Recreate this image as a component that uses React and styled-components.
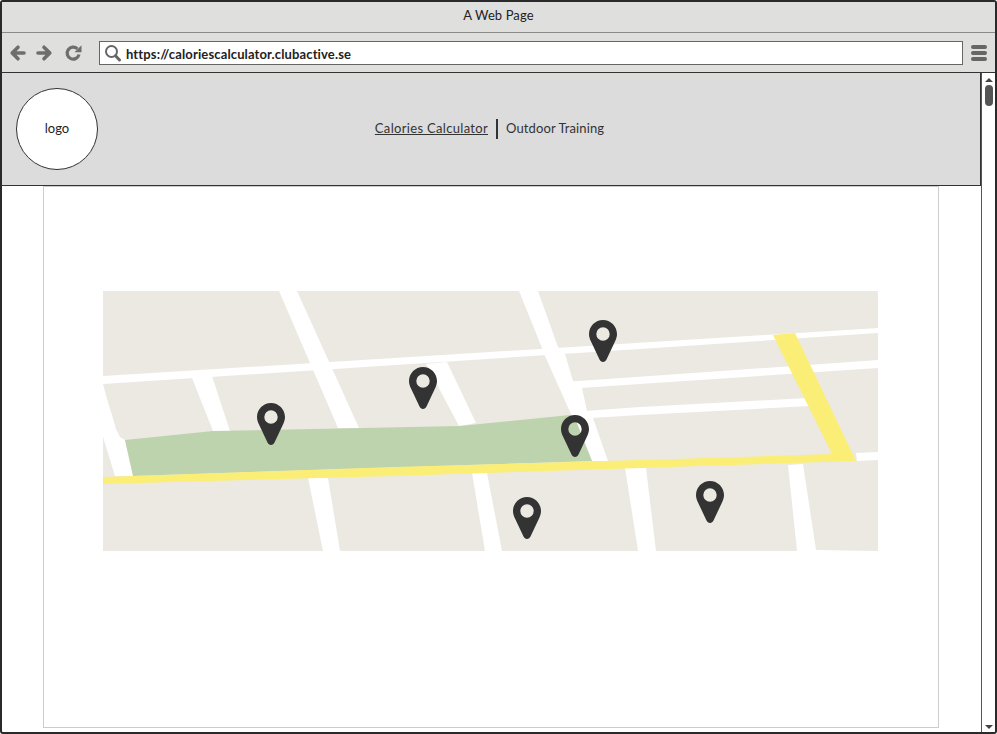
import React from 'react';
import styled, { createGlobalStyle } from 'styled-components';

const GlobalStyle = createGlobalStyle`
  html, body {
    margin: 0;
    padding: 0;
    background: #fff;
  }
  body {
    font-family: "Lato", "Liberation Sans", sans-serif;
    color: #222;
  }
`;

// map is drawn with coordinates local to the 775x260 picture
const ROADS = [
  '0,85 775,37 775,42 537,58 0,93',
  '176,0 194,0 256,137 235,137',
  '205,187 225,187 237,260 220,260',
  '416,0 435,0 455,56 462,63 470,90 479,97 484,120 490,127 505,170 489,170 442,65 439,57',
  '89,87 109,85 127,140 110,140',
  '323,73 344,71 373,132 356,135',
  '369,182 384,182 399,260 382,260',
  '468,90.5 547,85 775,69 775,77 537,93 477,97',
  '482,120 537,116 704,107 707,115 537,124 488,127',
  '753,162 775,161 775,169 754,170',
  '522,177 543,177 553,260 535,260',
  '685,174 700,173 713,259 775,260 694,260',
  '0,93 4,108 9,124 13,138 17,146 22,149 30,185 12,185 0,146',
];

const PINS = [
  { x: 154, y: 112 },
  { x: 306, y: 76 },
  { x: 486, y: 29 },
  { x: 458, y: 124 },
  { x: 410, y: 206 },
  { x: 593, y: 190 },
];

const App = () => {
  return (
    <>
      <GlobalStyle />
      <Window>
        <TitleBar>A Web Page</TitleBar>
        <ToolBar>
          <NavIcons>
            <ToolIcon viewBox="0 0 16 16">
              <path d="M8 2.200 L2.200 8 L8 13.800 M2.200 8 H14" />
            </ToolIcon>
            <ToolIcon viewBox="0 0 16 16">
              <path d="M8 2.200 L13.800 8 L8 13.800 M13.800 8 H2" />
            </ToolIcon>
            <ReloadIcon viewBox="0 0 16 16">
              <path d="M12.400 3.900 A6 6 0 1 0 14 9.500" />
              <polygon points="9.500,7.200 16.500,7.200 16.500,0.200" />
            </ReloadIcon>
          </NavIcons>
          <UrlBar>
            <SearchIcon viewBox="0 0 18 18">
              <circle cx="7.500" cy="7.500" r="5.500" fill="none" stroke="#666" strokeWidth="2" />
              <path d="M11.500 11.800 L15.500 16" stroke="#666" strokeWidth="3" strokeLinecap="round" />
            </SearchIcon>
            <UrlText>https://caloriescalculator.clubactive.se</UrlText>
          </UrlBar>
          <Burger>
            <span />
            <span />
            <span />
          </Burger>
        </ToolBar>
        <Viewport>
          <Page>
            <Header>
              <Logo>logo</Logo>
              <Nav>
                <ActiveLink href="#">Calories Calculator</ActiveLink>
                <NavDivider />
                <NavLink href="#">Outdoor Training</NavLink>
              </Nav>
            </Header>
            <Content>
              <MapBox>
                <MapArt viewBox="0 0 775 260">
                  <rect width="775" height="260" fill="#ebe9e2" />
                  {ROADS.map((points) => (
                    <polygon key={points} points={points} fill="#fff" />
                  ))}
                  <polygon
                    points="22,149 110,140 357,135 467,124 472,127 489,170 30,185"
                    fill="#bdd3ad"
                  />
                  <polygon
                    points="0,186 292,176 537,169 729,163 670,44 692,42 753,170 537,177 292,185 0,193"
                    fill="#fbee77"
                  />
                </MapArt>
                {PINS.map((pin) => (
                  <Pin key={pin.x} $x={pin.x} $y={pin.y} viewBox="0 0 28 42">
                    <path
                      fillRule="evenodd"
                      d="M14 0C6.300 0 0 6.300 0 14c0 2.800.8 5 2 7.500l8.500 18C11.200 41 12.500 42 14 42s2.800-1 3.500-2.500l8.500-18c1.200-2.500 2-4.700 2-7.500C28 6.300 21.700 0 14 0ZM14 7.300a6.700 6.700 0 1 1 0 13.400a6.700 6.700 0 1 1 0-13.400Z"
                    />
                  </Pin>
                ))}
              </MapBox>
            </Content>
          </Page>
          <ScrollBar>
            <div>
              <ArrowUp />
              <Thumb />
            </div>
            <ArrowDown />
          </ScrollBar>
        </Viewport>
      </Window>
    </>
  );
};

const Window = styled.div`
  box-sizing: border-box;
  width: 997px;
  height: 734px;
  border: 2px solid #2a2a2a;
  border-radius: 3px;
  display: flex;
  flex-direction: column;
  overflow: hidden;
  background: #fff;
`;

const TitleBar = styled.div`
  box-sizing: border-box;
  height: 31px;
  flex: none;
  background: #dfdfdd;
  border-bottom: 1px solid #8a8a8a;
  display: flex;
  align-items: center;
  justify-content: center;
  font-size: 13px;
  letter-spacing: 0.1px;
  padding-bottom: 5px;
`;

const ToolBar = styled.div`
  box-sizing: border-box;
  height: 40px;
  flex: none;
  background: #dfdfdd;
  border-bottom: 1px solid #333;
  display: flex;
  align-items: center;
  padding: 0 8px;
`;

const NavIcons = styled.div`
  display: flex;
  align-items: center;
  gap: 10px;
  width: 89px;
  flex: none;
`;

const ToolIcon = styled.svg`
  width: 16px;
  height: 16px;
  flex: none;
  fill: none;
  stroke: #6e6e6e;
  stroke-width: 3.6;
  stroke-linecap: round;
  stroke-linejoin: round;
  overflow: visible;
`;

const ReloadIcon = styled(ToolIcon)`
  margin-left: 3px;
  stroke-width: 3.2;
  stroke-linecap: butt;

  polygon {
    fill: #6e6e6e;
    stroke: none;
  }
`;

const UrlBar = styled.div`
  box-sizing: border-box;
  flex: 1;
  height: 24px;
  background: #fff;
  border: 1px solid #666;
  display: flex;
  align-items: center;
  padding-left: 4px;
  gap: 4px;
`;

const SearchIcon = styled.svg`
  width: 18px;
  height: 18px;
  flex: none;
`;

const UrlText = styled.span`
  font-size: 13px;
  font-weight: 700;
  letter-spacing: 0.13px;
  color: #222;
  padding-top: 2px;
`;

const Burger = styled.div`
  display: flex;
  flex-direction: column;
  gap: 2px;
  margin-left: 8px;
  width: 16px;
  flex: none;

  span {
    display: block;
    height: 4px;
    border-radius: 2px;
    background: #666;
  }
`;

const Viewport = styled.div`
  flex: 1;
  min-height: 0;
  display: flex;
`;

const Page = styled.div`
  flex: 1;
  min-width: 0;
  display: flex;
  flex-direction: column;
`;

const Header = styled.header`
  box-sizing: border-box;
  height: 113px;
  flex: none;
  margin-left: -1px;
  background: #dcdcdc;
  border: 1px solid #333;
  border-top: none;
  display: grid;
  grid-template-columns: 1fr auto 1fr;
  align-items: center;
  padding: 0 17px 1px 14px;
`;

const Logo = styled.div`
  box-sizing: border-box;
  width: 82px;
  height: 82px;
  border: 1px solid #333;
  border-radius: 50%;
  background: #fff;
  display: flex;
  align-items: center;
  justify-content: center;
  font-size: 13px;
  padding-bottom: 1px;
`;

const Nav = styled.nav`
  display: flex;
  align-items: center;
  gap: 8px;
  font-size: 13px;
  line-height: 16px;
`;

const NavLink = styled.a`
  color: #333;
  text-decoration: none;
  letter-spacing: 0.1px;
  margin-top: -1px;
`;

const ActiveLink = styled(NavLink)`
  text-decoration: underline;
  letter-spacing: 0.32px;
`;

const NavDivider = styled.span`
  width: 2px;
  height: 20px;
  background: #333;
`;

const Content = styled.main`
  box-sizing: border-box;
  flex: 1;
  min-height: 0;
  width: 896px;
  margin: 0 0 4px 41px;
  padding: 104px 0 0 59px;
  border: 1px solid #ccc;
`;

const MapBox = styled.div`
  position: relative;
  width: 775px;
  height: 260px;
`;

const MapArt = styled.svg`
  display: block;
  width: 775px;
  height: 260px;
`;

const Pin = styled.svg`
  position: absolute;
  left: ${(p) => p.$x}px;
  top: ${(p) => p.$y}px;
  width: 28px;
  height: 42px;
  fill: #333;
`;

const ScrollBar = styled.aside`
  box-sizing: border-box;
  width: 14px;
  flex: none;
  border-left: 1px solid #555;
  display: flex;
  flex-direction: column;
  align-items: center;
  justify-content: space-between;
  padding: 5px 0 3px;
  background: #fff;
`;

const ArrowUp = styled.div`
  width: 0;
  height: 0;
  margin: 0 auto;
  border-left: 4px solid transparent;
  border-right: 4px solid transparent;
  border-bottom: 4px solid #444;
`;

const ArrowDown = styled.div`
  width: 0;
  height: 0;
  border-left: 4px solid transparent;
  border-right: 4px solid transparent;
  border-top: 4px solid #444;
`;

const Thumb = styled.div`
  width: 8px;
  height: 21px;
  margin-top: 3px;
  border-radius: 4px;
  background: #555;
`;

export default App;
